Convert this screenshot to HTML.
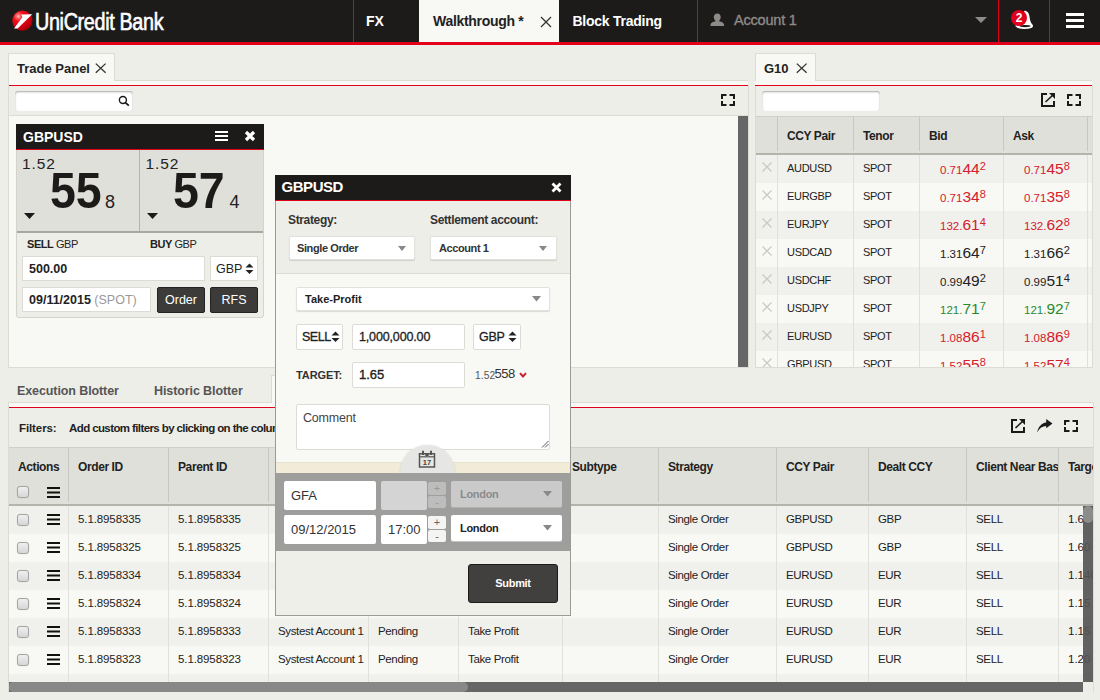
<!DOCTYPE html>
<html><head><meta charset="utf-8">
<style>
*{box-sizing:border-box;margin:0;padding:0}
html,body{width:1100px;height:700px;overflow:hidden;background:#eeeee8;font-family:"Liberation Sans",sans-serif;color:#222}
.a{position:absolute}
.hdr{left:0;top:0;width:1100px;height:42px;background:#1d1a1a}
.redbar{left:0;top:42px;width:1100px;height:3px;background:#e2001a}
.vr{top:0;width:1px;height:42px;background:#e2001a}
.ht{font-weight:bold;font-size:14px;color:#fff;white-space:nowrap;line-height:16px}
.t{white-space:nowrap}
.b{font-weight:bold}
.sel{background:#fff;border:1px solid #e2e2da;border-radius:2px;box-shadow:0 1px 1px rgba(0,0,0,0.12)}
.inp{background:#fff;border:1px solid #dcdcd4;border-radius:2px}
.inp2{background:#fff;border-radius:2px}
.pm{width:18px;font-size:11px;line-height:12px;text-align:center;border-radius:2px}
</style></head><body>
<!-- HEADER -->
<div class="a hdr"></div>
<div class="a redbar"></div>
<svg class="a" style="left:10px;top:8px" width="26" height="26" viewBox="10 8 26 26">
 <defs>
  <radialGradient id="ball" cx="0.3" cy="0.28" r="0.8">
   <stop offset="0" stop-color="#ffc8c8"/><stop offset="0.12" stop-color="#ff6a6a"/><stop offset="0.3" stop-color="#f0101c"/><stop offset="0.7" stop-color="#d00010"/><stop offset="1" stop-color="#a00008"/>
  </radialGradient>
 </defs>
 <circle cx="22.4" cy="20.7" r="10.1" fill="url(#ball)"/>
 <polygon points="14,28.6 22.3,17.3 21.4,14.6 32.3,14.2 17.6,28.6" fill="#fff"/>
</svg>
<div class="a t" style="left:35px;top:9px;font-size:23px;color:#fff;-webkit-text-stroke:0.6px #fff;letter-spacing:-0.4px;word-spacing:0px;transform:scaleX(0.86);transform-origin:0 0;line-height:26px">UniCredit Bank</div>
<div class="a vr" style="left:353px"></div>
<div class="a vr" style="left:697px"></div>
<div class="a vr" style="left:998px"></div>
<div class="a vr" style="left:1049px"></div>
<div class="a ht" style="left:366px;top:13px">FX</div>
<div class="a" style="left:419px;top:0;width:140px;height:42px;background:#f8f8f4"></div>
<div class="a ht" style="left:433px;top:13px;color:#222;letter-spacing:-0.3px">Walkthrough *</div>
<svg class="a" style="left:540px;top:16px" width="12" height="12"><path d="M1 1L11 11M11 1L1 11" stroke="#333" stroke-width="1.3"/></svg>
<div class="a ht" style="left:572.5px;top:13px;letter-spacing:-0.25px">Block Trading</div>
<svg class="a" style="left:710px;top:13px" width="15" height="14" viewBox="0 0 15 14"><path d="M7.5 0.5c2 0 3.2 1.6 3.2 3.6 0 1.6-0.8 3-1.6 3.6v0.6c2.6 0.8 5 1.6 5 3.6V13H0.5v-1.1c0-2 2.4-2.8 5-3.6v-0.6C4.6 7.1 3.8 5.7 3.8 4.1c0-2 1.2-3.6 3.7-3.6z" fill="#8d8b87"/></svg>
<div class="a t" style="left:734px;top:12px;font-size:14.5px;color:#8d8b87;-webkit-text-stroke:0.35px #8d8b87;letter-spacing:-0.2px;line-height:17px">Account 1</div>
<svg class="a" style="left:975px;top:17px" width="12" height="7"><polygon points="0,0 12,0 6,6" fill="#8d8b87"/></svg>
<svg class="a" style="left:1008px;top:8px" width="30" height="24" viewBox="1008 8 30 24">
 <path d="M1024.5 10.8c2.8 0 4.6 2.4 5 5.6 0.4 3.4 1.1 6.2 3.3 8.6 l0.2 1.6 h-17.5 l0.2-1.6" fill="#fff"/>
 <ellipse cx="1024.5" cy="26.6" rx="8.4" ry="2.3" fill="#fff"/>
 <ellipse cx="1025" cy="26.1" rx="5.5" ry="1.1" fill="#1d1a1a"/>
 <circle cx="1019" cy="18" r="8" fill="#e2001a"/>
 <text x="1019" y="22.3" font-size="12" font-weight="bold" font-family="Liberation Sans" fill="#fff" text-anchor="middle">2</text>
</svg>
<div class="a" style="left:1066px;top:13px;width:18px;height:3px;background:#fff"></div>
<div class="a" style="left:1066px;top:19px;width:18px;height:3px;background:#fff"></div>
<div class="a" style="left:1066px;top:25px;width:18px;height:3px;background:#fff"></div>


<!-- TRADE PANEL -->
<div class="a" style="left:8px;top:53px;width:107px;height:28px;background:#f8f8f4;border:1px solid #dcdcd4;border-bottom:none"></div>
<div class="a t b" style="left:17px;top:61px;font-size:13px;line-height:15px;color:#222">Trade Panel</div>
<svg class="a" style="left:95px;top:63px" width="12" height="11"><path d="M0.8 0.6L10.6 9.8M10.6 0.6L0.8 9.8" stroke="#333" stroke-width="1.3"/></svg>
<div class="a" style="left:115px;top:80px;width:633px;height:1px;background:#dcdcd4"></div>
<div class="a" style="left:9px;top:81px;width:739px;height:4px;background:#f8f8f4"></div>
<div class="a" style="left:9px;top:85px;width:739px;height:1px;background:#e2001a"></div>
<div class="a" style="left:8px;top:81px;width:1px;height:287px;background:#dcdcd4"></div>
<div class="a" style="left:748px;top:85px;width:1px;height:283px;background:#dcdcd4"></div>
<div class="a" style="left:9px;top:115px;width:739px;height:1px;background:#dcdcd4"></div>
<div class="a" style="left:9px;top:116px;width:729px;height:251px;background:#f8f8f4"></div>
<div class="a" style="left:738px;top:116px;width:10px;height:251px;background:#666"></div>
<div class="a" style="left:8px;top:367px;width:741px;height:1px;background:#dcdcd4"></div>
<div class="a" style="left:15px;top:91px;width:118px;height:20px;background:#fff;border-radius:3px;box-shadow:inset 0 1px 2px rgba(0,0,0,0.35)"></div>
<svg class="a" style="left:118px;top:95px" width="13" height="12"><circle cx="4.9" cy="5" r="3.5" fill="none" stroke="#1a1a1a" stroke-width="1.4"/><path d="M7.4 7.6L10.8 10.6" stroke="#1a1a1a" stroke-width="1.9"/></svg>
<svg class="a" style="left:721px;top:94px" width="15" height="13"><path d="M1 5V1H5.5M8.5 1H13V5M13 7V11H8.5M5.5 11H1V7" fill="none" stroke="#1a1a1a" stroke-width="2"/></svg>


<!-- TILE -->
<div class="a" style="left:16px;top:124px;width:248px;height:194px;background:#eeeee8;border:1px solid #d4d4cc;border-radius:0 0 3px 3px"></div>
<div class="a" style="left:16px;top:124px;width:248px;height:25px;background:#1d1a1a"></div>
<div class="a" style="left:16px;top:149px;width:248px;height:1px;background:#e2001a"></div>
<div class="a ht" style="left:23px;top:129px">GBPUSD</div>
<div class="a" style="left:215px;top:131px;width:13px;height:2px;background:#fff"></div>
<div class="a" style="left:215px;top:135px;width:13px;height:2px;background:#fff"></div>
<div class="a" style="left:215px;top:139px;width:13px;height:2px;background:#fff"></div>
<svg class="a" style="left:244px;top:130px" width="12" height="12"><path d="M2 2L10 10M10 2L2 10" stroke="#fff" stroke-width="3.2"/></svg>
<div class="a" style="left:17px;top:150px;width:246px;height:81px;background:#e0e0da"></div>
<div class="a" style="left:139px;top:150px;width:1px;height:81px;background:#b4b4ac"></div>
<div class="a" style="left:17px;top:231px;width:246px;height:2px;background:#a8a8a0"></div>
<div class="a t" style="left:22px;top:155px;font-size:15.5px;letter-spacing:0.9px;line-height:17px;color:#222">1.52</div>
<div class="a t b" style="left:50px;top:165.5px;font-size:50px;line-height:50px;transform:scaleX(0.93);transform-origin:0 0;color:#1d1a1a">55</div>
<div class="a t" style="left:105px;top:192.5px;font-size:18px;line-height:18px;color:#222">8</div>
<svg class="a" style="left:24px;top:213px" width="11" height="7"><polygon points="0,0 11,0 5.5,6" fill="#1d1a1a"/></svg>
<div class="a t" style="left:145.5px;top:155px;font-size:15.5px;letter-spacing:0.9px;line-height:17px;color:#222">1.52</div>
<div class="a t b" style="left:173px;top:165.5px;font-size:50px;line-height:50px;transform:scaleX(0.93);transform-origin:0 0;color:#1d1a1a">57</div>
<div class="a t" style="left:229.5px;top:192.5px;font-size:18px;line-height:18px;color:#222">4</div>
<svg class="a" style="left:147px;top:213px" width="11" height="7"><polygon points="0,0 11,0 5.5,6" fill="#1d1a1a"/></svg>
<div class="a t" style="left:27px;top:238px;font-size:11px;letter-spacing:-0.45px;line-height:12px;color:#222"><b>SELL</b> GBP</div>
<div class="a t" style="left:150px;top:238px;font-size:11px;letter-spacing:-0.45px;line-height:12px;color:#222"><b>BUY</b> GBP</div>
<div class="a" style="left:22px;top:256px;width:183px;height:25px;background:#fff;border:1px solid #dcdcd4"></div>
<div class="a t b" style="left:29px;top:262px;font-size:12.5px;line-height:14px;color:#222">500.00</div>
<div class="a" style="left:210px;top:256px;width:48px;height:25px;background:#fff;border:1px solid #dcdcd4"></div>
<div class="a t" style="left:216px;top:262px;font-size:12.5px;line-height:14px;color:#222">GBP</div>
<svg class="a" style="left:245px;top:263px" width="9" height="12"><polygon points="0.5,4.5 8.5,4.5 4.5,0.5" fill="#222"/><polygon points="0.5,7 8.5,7 4.5,11" fill="#222"/></svg>
<div class="a" style="left:22px;top:287px;width:129px;height:25px;background:#fff;border:1px solid #dcdcd4"></div>
<div class="a t" style="left:29px;top:293px;font-size:12.5px;line-height:14px;color:#222"><b>09/11/2015</b> <span style="color:#999">(SPOT)</span></div>
<div class="a" style="left:157px;top:287px;width:48px;height:26px;background:#3d3b39;border:1px solid #222;border-radius:2px"></div>
<div class="a t" style="left:157px;top:293px;width:48px;text-align:center;font-size:12.5px;line-height:14px;color:#fff">Order</div>
<div class="a" style="left:210px;top:287px;width:48px;height:26px;background:#3d3b39;border:1px solid #222;border-radius:2px"></div>
<div class="a t" style="left:210px;top:293px;width:48px;text-align:center;font-size:12.5px;line-height:14px;color:#fff">RFS</div>


<!-- G10 PANEL -->
<div class="a" style="left:755px;top:53px;width:61px;height:28px;background:#f8f8f4;border:1px solid #dcdcd4;border-bottom:none"></div>
<div class="a t b" style="left:764px;top:61px;font-size:13px;line-height:15px;color:#222">G10</div>
<svg class="a" style="left:796px;top:63px" width="12" height="11"><path d="M0.8 0.6L10.6 9.8M10.6 0.6L0.8 9.8" stroke="#333" stroke-width="1.3"/></svg>
<div class="a" style="left:816px;top:80px;width:276px;height:1px;background:#dcdcd4"></div>
<div class="a" style="left:755px;top:81px;width:337px;height:4px;background:#f8f8f4"></div>
<div class="a" style="left:755px;top:85px;width:337px;height:1px;background:#e2001a"></div>
<div class="a" style="left:755px;top:86px;width:1px;height:282px;background:#dcdcd4"></div>
<div class="a" style="left:1092px;top:86px;width:1px;height:282px;background:#dcdcd4"></div>
<div class="a" style="left:762px;top:91px;width:118px;height:20px;background:#fff;border-radius:3px;box-shadow:inset 0 1px 2px rgba(0,0,0,0.35)"></div>
<svg class="a" style="left:1040px;top:92px" width="16" height="16"><path d="M7 2H2V14H14V9" fill="none" stroke="#1a1a1a" stroke-width="2"/><path d="M9 1H15V7Z" fill="#1a1a1a"/><path d="M13.5 2.5L5.5 10" stroke="#1a1a1a" stroke-width="1.6"/></svg>
<svg class="a" style="left:1067px;top:94px" width="15" height="13"><path d="M1 5V1H5.5M8.5 1H13V5M13 7V11H8.5M5.5 11H1V7" fill="none" stroke="#1a1a1a" stroke-width="2"/></svg>
<div class="a" style="left:756px;top:116px;width:336px;height:37px;background:#e0e0da;border-top:1px solid #d0d0c8"></div>
<div class="a" style="left:756px;top:153px;width:336px;height:2px;background:#b4b4ac"></div>
<div class="a" style="left:777px;top:117px;width:1px;height:34px;background:#c8c8c0"></div>
<div class="a" style="left:853px;top:117px;width:1px;height:34px;background:#c8c8c0"></div>
<div class="a" style="left:919px;top:117px;width:1px;height:34px;background:#c8c8c0"></div>
<div class="a" style="left:1003px;top:117px;width:1px;height:34px;background:#c8c8c0"></div>
<div class="a" style="left:1087px;top:117px;width:1px;height:34px;background:#c8c8c0"></div>
<div class="a t b" style="left:787px;top:129px;font-size:12px;letter-spacing:-0.4px;line-height:14px">CCY Pair</div>
<div class="a t b" style="left:863px;top:129px;font-size:12px;letter-spacing:-0.4px;line-height:14px">Tenor</div>
<div class="a t b" style="left:929px;top:129px;font-size:12px;letter-spacing:-0.4px;line-height:14px">Bid</div>
<div class="a t b" style="left:1013px;top:129px;font-size:12px;letter-spacing:-0.4px;line-height:14px">Ask</div>
<div class="a" style="left:756px;top:155px;width:336px;height:212px;overflow:hidden">
<div class="a" style="left:0;top:0px;width:336px;height:28px;background:#f0f0ec"></div>
<svg class="a" style="left:6px;top:7px" width="10" height="10"><path d="M0.5 0.5L9.5 9.5M9.5 0.5L0.5 9.5" stroke="#c8c8c4" stroke-width="1.2"/></svg>
<div class="a t" style="left:31px;top:7px;font-size:11px;letter-spacing:-0.3px;line-height:13px">AUDUSD</div>
<div class="a t" style="left:107px;top:7px;font-size:11px;letter-spacing:-0.3px;line-height:13px">SPOT</div>
<div class="a t" style="left:184px;top:6px;line-height:16px;color:#d4202c"><span style="font-size:11.5px">0.71</span><span style="font-size:15.5px">44</span><span style="font-size:11px;position:relative;top:-4px">2</span></div>
<div class="a t" style="left:268px;top:6px;line-height:16px;color:#d4202c"><span style="font-size:11.5px">0.71</span><span style="font-size:15.5px">45</span><span style="font-size:11px;position:relative;top:-4px">8</span></div>
<div class="a" style="left:0;top:28px;width:336px;height:28px;background:#f8f8f4"></div>
<svg class="a" style="left:6px;top:35px" width="10" height="10"><path d="M0.5 0.5L9.5 9.5M9.5 0.5L0.5 9.5" stroke="#c8c8c4" stroke-width="1.2"/></svg>
<div class="a t" style="left:31px;top:35px;font-size:11px;letter-spacing:-0.3px;line-height:13px">EURGBP</div>
<div class="a t" style="left:107px;top:35px;font-size:11px;letter-spacing:-0.3px;line-height:13px">SPOT</div>
<div class="a t" style="left:184px;top:34px;line-height:16px;color:#d4202c"><span style="font-size:11.5px">0.71</span><span style="font-size:15.5px">34</span><span style="font-size:11px;position:relative;top:-4px">8</span></div>
<div class="a t" style="left:268px;top:34px;line-height:16px;color:#d4202c"><span style="font-size:11.5px">0.71</span><span style="font-size:15.5px">35</span><span style="font-size:11px;position:relative;top:-4px">8</span></div>
<div class="a" style="left:0;top:56px;width:336px;height:28px;background:#f0f0ec"></div>
<svg class="a" style="left:6px;top:63px" width="10" height="10"><path d="M0.5 0.5L9.5 9.5M9.5 0.5L0.5 9.5" stroke="#c8c8c4" stroke-width="1.2"/></svg>
<div class="a t" style="left:31px;top:63px;font-size:11px;letter-spacing:-0.3px;line-height:13px">EURJPY</div>
<div class="a t" style="left:107px;top:63px;font-size:11px;letter-spacing:-0.3px;line-height:13px">SPOT</div>
<div class="a t" style="left:184px;top:62px;line-height:16px;color:#d4202c"><span style="font-size:11.5px">132.</span><span style="font-size:15.5px">61</span><span style="font-size:11px;position:relative;top:-4px">4</span></div>
<div class="a t" style="left:268px;top:62px;line-height:16px;color:#d4202c"><span style="font-size:11.5px">132.</span><span style="font-size:15.5px">62</span><span style="font-size:11px;position:relative;top:-4px">8</span></div>
<div class="a" style="left:0;top:84px;width:336px;height:28px;background:#f8f8f4"></div>
<svg class="a" style="left:6px;top:91px" width="10" height="10"><path d="M0.5 0.5L9.5 9.5M9.5 0.5L0.5 9.5" stroke="#c8c8c4" stroke-width="1.2"/></svg>
<div class="a t" style="left:31px;top:91px;font-size:11px;letter-spacing:-0.3px;line-height:13px">USDCAD</div>
<div class="a t" style="left:107px;top:91px;font-size:11px;letter-spacing:-0.3px;line-height:13px">SPOT</div>
<div class="a t" style="left:184px;top:90px;line-height:16px;color:#222"><span style="font-size:11.5px">1.31</span><span style="font-size:15.5px">64</span><span style="font-size:11px;position:relative;top:-4px">7</span></div>
<div class="a t" style="left:268px;top:90px;line-height:16px;color:#222"><span style="font-size:11.5px">1.31</span><span style="font-size:15.5px">66</span><span style="font-size:11px;position:relative;top:-4px">2</span></div>
<div class="a" style="left:0;top:112px;width:336px;height:28px;background:#f0f0ec"></div>
<svg class="a" style="left:6px;top:119px" width="10" height="10"><path d="M0.5 0.5L9.5 9.5M9.5 0.5L0.5 9.5" stroke="#c8c8c4" stroke-width="1.2"/></svg>
<div class="a t" style="left:31px;top:119px;font-size:11px;letter-spacing:-0.3px;line-height:13px">USDCHF</div>
<div class="a t" style="left:107px;top:119px;font-size:11px;letter-spacing:-0.3px;line-height:13px">SPOT</div>
<div class="a t" style="left:184px;top:118px;line-height:16px;color:#222"><span style="font-size:11.5px">0.99</span><span style="font-size:15.5px">49</span><span style="font-size:11px;position:relative;top:-4px">2</span></div>
<div class="a t" style="left:268px;top:118px;line-height:16px;color:#222"><span style="font-size:11.5px">0.99</span><span style="font-size:15.5px">51</span><span style="font-size:11px;position:relative;top:-4px">4</span></div>
<div class="a" style="left:0;top:140px;width:336px;height:28px;background:#f8f8f4"></div>
<svg class="a" style="left:6px;top:147px" width="10" height="10"><path d="M0.5 0.5L9.5 9.5M9.5 0.5L0.5 9.5" stroke="#c8c8c4" stroke-width="1.2"/></svg>
<div class="a t" style="left:31px;top:147px;font-size:11px;letter-spacing:-0.3px;line-height:13px">USDJPY</div>
<div class="a t" style="left:107px;top:147px;font-size:11px;letter-spacing:-0.3px;line-height:13px">SPOT</div>
<div class="a t" style="left:184px;top:146px;line-height:16px;color:#2b8a2b"><span style="font-size:11.5px">121.</span><span style="font-size:15.5px">71</span><span style="font-size:11px;position:relative;top:-4px">7</span></div>
<div class="a t" style="left:268px;top:146px;line-height:16px;color:#2b8a2b"><span style="font-size:11.5px">121.</span><span style="font-size:15.5px">92</span><span style="font-size:11px;position:relative;top:-4px">7</span></div>
<div class="a" style="left:0;top:168px;width:336px;height:28px;background:#f0f0ec"></div>
<svg class="a" style="left:6px;top:175px" width="10" height="10"><path d="M0.5 0.5L9.5 9.5M9.5 0.5L0.5 9.5" stroke="#c8c8c4" stroke-width="1.2"/></svg>
<div class="a t" style="left:31px;top:175px;font-size:11px;letter-spacing:-0.3px;line-height:13px">EURUSD</div>
<div class="a t" style="left:107px;top:175px;font-size:11px;letter-spacing:-0.3px;line-height:13px">SPOT</div>
<div class="a t" style="left:184px;top:174px;line-height:16px;color:#d4202c"><span style="font-size:11.5px">1.08</span><span style="font-size:15.5px">86</span><span style="font-size:11px;position:relative;top:-4px">1</span></div>
<div class="a t" style="left:268px;top:174px;line-height:16px;color:#d4202c"><span style="font-size:11.5px">1.08</span><span style="font-size:15.5px">86</span><span style="font-size:11px;position:relative;top:-4px">9</span></div>
<div class="a" style="left:0;top:196px;width:336px;height:28px;background:#f8f8f4"></div>
<svg class="a" style="left:6px;top:203px" width="10" height="10"><path d="M0.5 0.5L9.5 9.5M9.5 0.5L0.5 9.5" stroke="#c8c8c4" stroke-width="1.2"/></svg>
<div class="a t" style="left:31px;top:203px;font-size:11px;letter-spacing:-0.3px;line-height:13px">GBPUSD</div>
<div class="a t" style="left:107px;top:203px;font-size:11px;letter-spacing:-0.3px;line-height:13px">SPOT</div>
<div class="a t" style="left:184px;top:202px;line-height:16px;color:#d4202c"><span style="font-size:11.5px">1.52</span><span style="font-size:15.5px">55</span><span style="font-size:11px;position:relative;top:-4px">8</span></div>
<div class="a t" style="left:268px;top:202px;line-height:16px;color:#d4202c"><span style="font-size:11.5px">1.52</span><span style="font-size:15.5px">57</span><span style="font-size:11px;position:relative;top:-4px">4</span></div>
</div>
<div class="a" style="left:777px;top:155px;width:1px;height:212px;background:#e0e0da"></div>
<div class="a" style="left:853px;top:155px;width:1px;height:212px;background:#e0e0da"></div>
<div class="a" style="left:919px;top:155px;width:1px;height:212px;background:#e0e0da"></div>
<div class="a" style="left:1003px;top:155px;width:1px;height:212px;background:#e0e0da"></div>
<div class="a" style="left:1087px;top:155px;width:1px;height:212px;background:#e0e0da"></div>
<div class="a" style="left:755px;top:367px;width:338px;height:1px;background:#dcdcd4"></div>


<!-- BLOTTER -->
<div class="a" style="left:8px;top:402px;width:1px;height:290px;background:#dcdcd4"></div>
<div class="a" style="left:1093px;top:402px;width:1px;height:290px;background:#dcdcd4"></div>
<div class="a t b" style="left:17px;top:384px;font-size:12.5px;letter-spacing:-0.1px;line-height:14px;color:#555">Execution Blotter</div>
<div class="a t b" style="left:154px;top:384px;font-size:12.5px;letter-spacing:-0.1px;line-height:14px;color:#555">Historic Blotter</div>
<div class="a" style="left:271px;top:375px;width:120px;height:28px;background:#f8f8f4;border:1px solid #dcdcd4;border-bottom:none"></div>
<div class="a" style="left:8px;top:402px;width:263px;height:1px;background:#dcdcd4"></div>
<div class="a" style="left:391px;top:402px;width:702px;height:1px;background:#dcdcd4"></div>
<div class="a" style="left:9px;top:403px;width:1084px;height:4px;background:#f8f8f4"></div>
<div class="a" style="left:9px;top:407px;width:1084px;height:1px;background:#e2001a"></div>
<div class="a t b" style="left:19px;top:422px;font-size:11.5px;letter-spacing:-0.1px;line-height:13px;color:#222">Filters:</div>
<div class="a t b" style="left:69px;top:422px;font-size:11.5px;letter-spacing:-0.6px;line-height:13px;color:#222">Add custom filters by clicking on the column headers</div>
<svg class="a" style="left:1010px;top:418px" width="16" height="16"><path d="M7 2H2V14H14V9" fill="none" stroke="#1a1a1a" stroke-width="2"/><path d="M9 1H15V7Z" fill="#1a1a1a"/><path d="M13.5 2.5L5.5 10" stroke="#1a1a1a" stroke-width="1.6"/></svg>
<svg class="a" style="left:1036px;top:418px" width="18" height="16"><path d="M1.2 14.5C2 8.8 5.5 5 10.2 4.4V1L16.5 5.5L10.2 10.2V8C6.5 8 3.5 10 1.2 14.5Z" fill="#1a1a1a"/></svg>
<svg class="a" style="left:1064px;top:420px" width="15" height="13"><path d="M1 5V1H5.5M8.5 1H13V5M13 7V11H8.5M5.5 11H1V7" fill="none" stroke="#1a1a1a" stroke-width="2"/></svg>
<div class="a" style="left:9px;top:447px;width:1084px;height:57px;background:#e0e0da;border-top:1px solid #d0d0c8"></div>
<div class="a" style="left:9px;top:504px;width:1084px;height:2px;background:#b4b4ac"></div>
<div class="a" style="left:9px;top:506px;width:1084px;height:176px;overflow:hidden">
<div class="a" style="left:0;top:0px;width:1084px;height:28px;background:#f0f0ec"></div>
<div class="a" style="left:8px;top:8px;width:12px;height:12px;background:linear-gradient(#efefef,#d6d6d6);border:1px solid #a4a4a0;border-radius:3px;box-shadow:0 0 1px rgba(0,0,0,0.2)"></div>
<svg class="a" style="left:38px;top:8px" width="13" height="12"><path d="M0 1H13M0 5.5H13M0 10H13" stroke="#111" stroke-width="2"/></svg>
<div class="a t" style="left:69px;top:7px;font-size:11.5px;letter-spacing:-0.1px;line-height:13px;color:#222">5.1.8958335</div>
<div class="a t" style="left:169px;top:7px;font-size:11.5px;letter-spacing:-0.1px;line-height:13px;color:#222">5.1.8958335</div>
<div class="a t" style="left:659px;top:7px;font-size:11.5px;letter-spacing:-0.35px;line-height:13px;color:#222">Single Order</div>
<div class="a t" style="left:777px;top:7px;font-size:11.5px;letter-spacing:-0.35px;line-height:13px;color:#222">GBPUSD</div>
<div class="a t" style="left:869px;top:7px;font-size:11.5px;letter-spacing:-0.35px;line-height:13px;color:#222">GBP</div>
<div class="a t" style="left:967px;top:7px;font-size:11.5px;letter-spacing:-0.35px;line-height:13px;color:#222">SELL</div>
<div class="a t" style="left:1059px;top:7px;font-size:11.5px;letter-spacing:0;line-height:13px;color:#222">1.65</div>
<div class="a" style="left:0;top:28px;width:1084px;height:28px;background:#f8f8f4"></div>
<div class="a" style="left:8px;top:36px;width:12px;height:12px;background:linear-gradient(#efefef,#d6d6d6);border:1px solid #a4a4a0;border-radius:3px;box-shadow:0 0 1px rgba(0,0,0,0.2)"></div>
<svg class="a" style="left:38px;top:36px" width="13" height="12"><path d="M0 1H13M0 5.5H13M0 10H13" stroke="#111" stroke-width="2"/></svg>
<div class="a t" style="left:69px;top:35px;font-size:11.5px;letter-spacing:-0.1px;line-height:13px;color:#222">5.1.8958325</div>
<div class="a t" style="left:169px;top:35px;font-size:11.5px;letter-spacing:-0.1px;line-height:13px;color:#222">5.1.8958325</div>
<div class="a t" style="left:659px;top:35px;font-size:11.5px;letter-spacing:-0.35px;line-height:13px;color:#222">Single Order</div>
<div class="a t" style="left:777px;top:35px;font-size:11.5px;letter-spacing:-0.35px;line-height:13px;color:#222">GBPUSD</div>
<div class="a t" style="left:869px;top:35px;font-size:11.5px;letter-spacing:-0.35px;line-height:13px;color:#222">GBP</div>
<div class="a t" style="left:967px;top:35px;font-size:11.5px;letter-spacing:-0.35px;line-height:13px;color:#222">SELL</div>
<div class="a t" style="left:1059px;top:35px;font-size:11.5px;letter-spacing:0;line-height:13px;color:#222">1.60</div>
<div class="a" style="left:0;top:56px;width:1084px;height:28px;background:#f0f0ec"></div>
<div class="a" style="left:8px;top:64px;width:12px;height:12px;background:linear-gradient(#efefef,#d6d6d6);border:1px solid #a4a4a0;border-radius:3px;box-shadow:0 0 1px rgba(0,0,0,0.2)"></div>
<svg class="a" style="left:38px;top:64px" width="13" height="12"><path d="M0 1H13M0 5.5H13M0 10H13" stroke="#111" stroke-width="2"/></svg>
<div class="a t" style="left:69px;top:63px;font-size:11.5px;letter-spacing:-0.1px;line-height:13px;color:#222">5.1.8958334</div>
<div class="a t" style="left:169px;top:63px;font-size:11.5px;letter-spacing:-0.1px;line-height:13px;color:#222">5.1.8958334</div>
<div class="a t" style="left:659px;top:63px;font-size:11.5px;letter-spacing:-0.35px;line-height:13px;color:#222">Single Order</div>
<div class="a t" style="left:777px;top:63px;font-size:11.5px;letter-spacing:-0.35px;line-height:13px;color:#222">EURUSD</div>
<div class="a t" style="left:869px;top:63px;font-size:11.5px;letter-spacing:-0.35px;line-height:13px;color:#222">EUR</div>
<div class="a t" style="left:967px;top:63px;font-size:11.5px;letter-spacing:-0.35px;line-height:13px;color:#222">SELL</div>
<div class="a t" style="left:1059px;top:63px;font-size:11.5px;letter-spacing:0;line-height:13px;color:#222">1.140</div>
<div class="a" style="left:0;top:84px;width:1084px;height:28px;background:#f8f8f4"></div>
<div class="a" style="left:8px;top:92px;width:12px;height:12px;background:linear-gradient(#efefef,#d6d6d6);border:1px solid #a4a4a0;border-radius:3px;box-shadow:0 0 1px rgba(0,0,0,0.2)"></div>
<svg class="a" style="left:38px;top:92px" width="13" height="12"><path d="M0 1H13M0 5.5H13M0 10H13" stroke="#111" stroke-width="2"/></svg>
<div class="a t" style="left:69px;top:91px;font-size:11.5px;letter-spacing:-0.1px;line-height:13px;color:#222">5.1.8958324</div>
<div class="a t" style="left:169px;top:91px;font-size:11.5px;letter-spacing:-0.1px;line-height:13px;color:#222">5.1.8958324</div>
<div class="a t" style="left:659px;top:91px;font-size:11.5px;letter-spacing:-0.35px;line-height:13px;color:#222">Single Order</div>
<div class="a t" style="left:777px;top:91px;font-size:11.5px;letter-spacing:-0.35px;line-height:13px;color:#222">EURUSD</div>
<div class="a t" style="left:869px;top:91px;font-size:11.5px;letter-spacing:-0.35px;line-height:13px;color:#222">EUR</div>
<div class="a t" style="left:967px;top:91px;font-size:11.5px;letter-spacing:-0.35px;line-height:13px;color:#222">SELL</div>
<div class="a t" style="left:1059px;top:91px;font-size:11.5px;letter-spacing:0;line-height:13px;color:#222">1.15</div>
<div class="a" style="left:0;top:112px;width:1084px;height:28px;background:#f0f0ec"></div>
<div class="a" style="left:8px;top:120px;width:12px;height:12px;background:linear-gradient(#efefef,#d6d6d6);border:1px solid #a4a4a0;border-radius:3px;box-shadow:0 0 1px rgba(0,0,0,0.2)"></div>
<svg class="a" style="left:38px;top:120px" width="13" height="12"><path d="M0 1H13M0 5.5H13M0 10H13" stroke="#111" stroke-width="2"/></svg>
<div class="a t" style="left:69px;top:119px;font-size:11.5px;letter-spacing:-0.1px;line-height:13px;color:#222">5.1.8958333</div>
<div class="a t" style="left:169px;top:119px;font-size:11.5px;letter-spacing:-0.1px;line-height:13px;color:#222">5.1.8958333</div>
<div class="a t" style="left:269px;top:119px;font-size:11.5px;letter-spacing:-0.35px;line-height:13px;color:#222">Systest Account 1</div>
<div class="a t" style="left:369px;top:119px;font-size:11.5px;letter-spacing:-0.35px;line-height:13px;color:#222">Pending</div>
<div class="a t" style="left:459px;top:119px;font-size:11.5px;letter-spacing:-0.35px;line-height:13px;color:#222">Take Profit</div>
<div class="a t" style="left:659px;top:119px;font-size:11.5px;letter-spacing:-0.35px;line-height:13px;color:#222">Single Order</div>
<div class="a t" style="left:777px;top:119px;font-size:11.5px;letter-spacing:-0.35px;line-height:13px;color:#222">EURUSD</div>
<div class="a t" style="left:869px;top:119px;font-size:11.5px;letter-spacing:-0.35px;line-height:13px;color:#222">EUR</div>
<div class="a t" style="left:967px;top:119px;font-size:11.5px;letter-spacing:-0.35px;line-height:13px;color:#222">SELL</div>
<div class="a t" style="left:1059px;top:119px;font-size:11.5px;letter-spacing:0;line-height:13px;color:#222">1.15</div>
<div class="a" style="left:0;top:140px;width:1084px;height:28px;background:#f8f8f4"></div>
<div class="a" style="left:8px;top:148px;width:12px;height:12px;background:linear-gradient(#efefef,#d6d6d6);border:1px solid #a4a4a0;border-radius:3px;box-shadow:0 0 1px rgba(0,0,0,0.2)"></div>
<svg class="a" style="left:38px;top:148px" width="13" height="12"><path d="M0 1H13M0 5.5H13M0 10H13" stroke="#111" stroke-width="2"/></svg>
<div class="a t" style="left:69px;top:147px;font-size:11.5px;letter-spacing:-0.1px;line-height:13px;color:#222">5.1.8958323</div>
<div class="a t" style="left:169px;top:147px;font-size:11.5px;letter-spacing:-0.1px;line-height:13px;color:#222">5.1.8958323</div>
<div class="a t" style="left:269px;top:147px;font-size:11.5px;letter-spacing:-0.35px;line-height:13px;color:#222">Systest Account 1</div>
<div class="a t" style="left:369px;top:147px;font-size:11.5px;letter-spacing:-0.35px;line-height:13px;color:#222">Pending</div>
<div class="a t" style="left:459px;top:147px;font-size:11.5px;letter-spacing:-0.35px;line-height:13px;color:#222">Take Profit</div>
<div class="a t" style="left:659px;top:147px;font-size:11.5px;letter-spacing:-0.35px;line-height:13px;color:#222">Single Order</div>
<div class="a t" style="left:777px;top:147px;font-size:11.5px;letter-spacing:-0.35px;line-height:13px;color:#222">EURUSD</div>
<div class="a t" style="left:869px;top:147px;font-size:11.5px;letter-spacing:-0.35px;line-height:13px;color:#222">EUR</div>
<div class="a t" style="left:967px;top:147px;font-size:11.5px;letter-spacing:-0.35px;line-height:13px;color:#222">SELL</div>
<div class="a t" style="left:1059px;top:147px;font-size:11.5px;letter-spacing:0;line-height:13px;color:#222">1.20</div>
<div class="a" style="left:0;top:168px;width:1084px;height:28px;background:#f0f0ec"></div>
</div>
<div class="a" style="left:68px;top:448px;width:1px;height:54px;background:#c8c8c0"></div>
<div class="a" style="left:68px;top:506px;width:1px;height:176px;background:#e0e0da"></div>
<div class="a" style="left:168px;top:448px;width:1px;height:54px;background:#c8c8c0"></div>
<div class="a" style="left:168px;top:506px;width:1px;height:176px;background:#e0e0da"></div>
<div class="a" style="left:268px;top:448px;width:1px;height:54px;background:#c8c8c0"></div>
<div class="a" style="left:268px;top:506px;width:1px;height:176px;background:#e0e0da"></div>
<div class="a" style="left:368px;top:448px;width:1px;height:54px;background:#c8c8c0"></div>
<div class="a" style="left:368px;top:506px;width:1px;height:176px;background:#e0e0da"></div>
<div class="a" style="left:458px;top:448px;width:1px;height:54px;background:#c8c8c0"></div>
<div class="a" style="left:458px;top:506px;width:1px;height:176px;background:#e0e0da"></div>
<div class="a" style="left:562px;top:448px;width:1px;height:54px;background:#c8c8c0"></div>
<div class="a" style="left:562px;top:506px;width:1px;height:176px;background:#e0e0da"></div>
<div class="a" style="left:658px;top:448px;width:1px;height:54px;background:#c8c8c0"></div>
<div class="a" style="left:658px;top:506px;width:1px;height:176px;background:#e0e0da"></div>
<div class="a" style="left:776px;top:448px;width:1px;height:54px;background:#c8c8c0"></div>
<div class="a" style="left:776px;top:506px;width:1px;height:176px;background:#e0e0da"></div>
<div class="a" style="left:868px;top:448px;width:1px;height:54px;background:#c8c8c0"></div>
<div class="a" style="left:868px;top:506px;width:1px;height:176px;background:#e0e0da"></div>
<div class="a" style="left:966px;top:448px;width:1px;height:54px;background:#c8c8c0"></div>
<div class="a" style="left:966px;top:506px;width:1px;height:176px;background:#e0e0da"></div>
<div class="a" style="left:1058px;top:448px;width:1px;height:54px;background:#c8c8c0"></div>
<div class="a" style="left:1058px;top:506px;width:1px;height:176px;background:#e0e0da"></div>
<div class="a" style="left:9px;top:448px;width:1084px;height:56px;overflow:hidden">
<div class="a t b" style="left:9px;top:12px;width:200px;overflow:hidden;font-size:12px;letter-spacing:-0.4px;line-height:14px;color:#222">Actions</div>
<div class="a t b" style="left:69px;top:12px;width:200px;overflow:hidden;font-size:12px;letter-spacing:-0.4px;line-height:14px;color:#222">Order ID</div>
<div class="a t b" style="left:169px;top:12px;width:200px;overflow:hidden;font-size:12px;letter-spacing:-0.4px;line-height:14px;color:#222">Parent ID</div>
<div class="a t b" style="left:563px;top:12px;width:200px;overflow:hidden;font-size:12px;letter-spacing:-0.4px;line-height:14px;color:#222">Subtype</div>
<div class="a t b" style="left:659px;top:12px;width:200px;overflow:hidden;font-size:12px;letter-spacing:-0.4px;line-height:14px;color:#222">Strategy</div>
<div class="a t b" style="left:777px;top:12px;width:200px;overflow:hidden;font-size:12px;letter-spacing:-0.4px;line-height:14px;color:#222">CCY Pair</div>
<div class="a t b" style="left:869px;top:12px;width:200px;overflow:hidden;font-size:12px;letter-spacing:-0.4px;line-height:14px;color:#222">Dealt CCY</div>
<div class="a t b" style="left:967px;top:12px;width:82px;overflow:hidden;font-size:12px;letter-spacing:-0.4px;line-height:14px;color:#222">Client Near Base</div>
<div class="a t b" style="left:1059px;top:12px;width:25px;overflow:hidden;font-size:12px;letter-spacing:-0.4px;line-height:14px;color:#222">Target</div>
<div class="a" style="left:8px;top:38px;width:12px;height:12px;background:linear-gradient(#efefef,#d6d6d6);border:1px solid #a4a4a0;border-radius:3px;box-shadow:0 0 1px rgba(0,0,0,0.2)"></div>
<svg class="a" style="left:38px;top:39px" width="13" height="12"><path d="M0 1H13M0 5.5H13M0 10H13" stroke="#111" stroke-width="2"/></svg>
</div>

<div class="a" style="left:1083px;top:506px;width:10px;height:176px;background:rgba(85,85,85,0.92)"></div>
<div class="a" style="left:1083px;top:506px;width:10px;height:17px;background:#8c8c8a;border-radius:5px"></div>
<div class="a" style="left:9px;top:682px;width:1074px;height:10px;background:#666"></div>
<div class="a" style="left:9px;top:682px;width:459px;height:10px;background:#888;border-radius:4px 5px 5px 4px"></div>
<div class="a" style="left:1083px;top:682px;width:10px;height:10px;background:#eeeee8"></div>


<!-- MODAL -->
<div class="a" style="left:275px;top:175px;width:296px;height:441px;background:#f8f8f4;border:1px solid #9a9a96;border-top:none"></div>
<div class="a" style="left:275px;top:175px;width:296px;height:25px;background:#1d1a1a"></div>
<div class="a" style="left:275px;top:200px;width:296px;height:1px;background:#e2001a"></div>
<div class="a ht" style="left:281.5px;top:178.5px;font-size:15px;letter-spacing:-0.45px">GBPUSD</div>
<svg class="a" style="left:551px;top:182px" width="11" height="11"><path d="M1.5 1.5L9.5 9.5M9.5 1.5L1.5 9.5" stroke="#fff" stroke-width="2.8"/></svg>
<div class="a" style="left:276px;top:201px;width:294px;height:72px;background:#eeeee8"></div>
<div class="a" style="left:276px;top:273px;width:294px;height:1px;background:#dcdcd4"></div>
<div class="a t b" style="left:288px;top:213px;font-size:12px;letter-spacing:-0.35px;line-height:14px;color:#333">Strategy:</div>
<div class="a t b" style="left:430px;top:213px;font-size:12px;letter-spacing:-0.35px;line-height:14px;color:#333">Settlement account:</div>
<div class="a sel" style="left:289px;top:236px;width:126px;height:24px"></div>
<div class="a t b" style="left:297px;top:242px;font-size:11px;letter-spacing:-0.4px;line-height:13px;color:#333">Single Order</div>
<svg class="a" style="left:398px;top:246px" width="8" height="6"><polygon points="0,0 8,0 4,5" fill="#888"/></svg>
<div class="a sel" style="left:430px;top:236px;width:127px;height:24px"></div>
<div class="a t b" style="left:439px;top:242px;font-size:11px;letter-spacing:-0.4px;line-height:13px;color:#333">Account 1</div>
<svg class="a" style="left:539px;top:246px" width="8" height="6"><polygon points="0,0 8,0 4,5" fill="#888"/></svg>

<div class="a sel" style="left:296px;top:287px;width:254px;height:24px"></div>
<div class="a t b" style="left:305px;top:293px;font-size:11px;letter-spacing:0px;line-height:13px;color:#222">Take-Profit</div>
<svg class="a" style="left:532px;top:296px" width="9" height="6"><polygon points="0,0 9,0 4.5,5.5" fill="#888"/></svg>

<div class="a inp" style="left:296px;top:324px;width:47px;height:26px"></div>
<div class="a t" style="left:302px;top:330px;font-size:12.5px;letter-spacing:-0.5px;line-height:14px;color:#222;-webkit-text-stroke:0.3px #222">SELL</div>
<svg class="a" style="left:331px;top:331px" width="9" height="12"><polygon points="0.5,4.5 8.5,4.5 4.5,0.5" fill="#222"/><polygon points="0.5,7 8.5,7 4.5,11" fill="#222"/></svg>
<div class="a inp" style="left:352px;top:324px;width:113px;height:26px"></div>
<div class="a t" style="left:359px;top:330px;font-size:12.5px;letter-spacing:-0.15px;line-height:14px;color:#222;-webkit-text-stroke:0.3px #222">1,000,000.00</div>
<div class="a inp" style="left:473px;top:324px;width:48px;height:26px"></div>
<div class="a t" style="left:479px;top:330px;font-size:12.5px;letter-spacing:-0.3px;line-height:14px;color:#222;-webkit-text-stroke:0.3px #222">GBP</div>
<svg class="a" style="left:508px;top:331px" width="9" height="12"><polygon points="0.5,4.5 8.5,4.5 4.5,0.5" fill="#222"/><polygon points="0.5,7 8.5,7 4.5,11" fill="#222"/></svg>

<div class="a t b" style="left:296px;top:369px;font-size:11px;letter-spacing:-0.1px;line-height:13px;color:#333">TARGET:</div>
<div class="a inp" style="left:352px;top:362px;width:113px;height:26px"></div>
<div class="a t" style="left:359px;top:368px;font-size:13px;letter-spacing:0px;line-height:14px;color:#222;-webkit-text-stroke:0.35px #222">1.65</div>
<div class="a t" style="left:475px;top:369.5px;font-size:10.2px;line-height:12px;letter-spacing:0.1px;color:#555">1.52</div><div class="a t" style="left:494.5px;top:366px;font-size:13px;line-height:15px;letter-spacing:-0.45px;color:#333">558</div>
<svg class="a" style="left:518.5px;top:371.5px" width="9" height="7"><path d="M1 1.2L4 4.5L7 1.2" fill="none" stroke="#c8202a" stroke-width="2"/></svg>

<div class="a inp" style="left:296px;top:404px;width:254px;height:46px"></div>
<div class="a t" style="left:303px;top:411px;font-size:12.5px;letter-spacing:-0.2px;line-height:14px;color:#444">Comment</div>
<svg class="a" style="left:541px;top:440px" width="8" height="8"><path d="M1 7.5L7.5 1M4 7.5L7.5 4" stroke="#555" stroke-width="1"/></svg>

<div class="a" style="left:276px;top:462px;width:294px;height:11px;background:#f1ebd8;border-top:1px solid #e6e2d0"></div>
<div class="a" style="left:399.5px;top:444.5px;width:55px;height:55px;border-radius:50%;background:#e6e6e4;box-shadow:0 0 2px rgba(0,0,0,0.12);clip-path:inset(-3px -3px 26.5px -3px)"></div>
<svg class="a" style="left:418px;top:450px" width="18" height="18" viewBox="0 0 18 18"><path d="M1.5 3.8H16.5V17H1.5Z" fill="none" stroke="#555" stroke-width="1.5"/><path d="M1.5 6.8H16.5" stroke="#555" stroke-width="1.2"/><path d="M4 0.8H6V5H4ZM12 0.8H14V5H12ZM7.3 3H10.7V6H7.3Z" fill="#555"/><text x="9" y="15.3" font-size="7.5" font-family="Liberation Sans" font-weight="bold" fill="#444" text-anchor="middle">17</text></svg>

<div class="a" style="left:276px;top:473px;width:294px;height:78px;background:#9e9e9c"></div>
<div class="a inp2" style="left:284px;top:481px;width:92px;height:29px"></div>
<div class="a t" style="left:291px;top:488px;font-size:13px;line-height:15px;color:#333">GFA</div>
<div class="a" style="left:381px;top:481px;width:46px;height:29px;background:#d4d4d4;border-radius:2px"></div>
<div class="a pm" style="left:428px;top:482px;height:12.5px;background:#bdbdbd;color:#999">+</div>
<div class="a pm" style="left:428px;top:496px;height:12px;background:#bdbdbd;color:#999">-</div>
<div class="a" style="left:451px;top:481px;width:111px;height:26px;background:#cacaca;border-radius:2px;box-shadow:0 1px 0 #b4b4b4"></div>
<div class="a t b" style="left:460px;top:488px;font-size:11px;letter-spacing:-0.3px;line-height:13px;color:#8a8a8a">London</div>
<svg class="a" style="left:543px;top:491px" width="9" height="6"><polygon points="0,0 9,0 4.5,5.5" fill="#8a8a8a"/></svg>

<div class="a inp2" style="left:284px;top:515px;width:92px;height:29px"></div>
<div class="a t" style="left:291px;top:522px;font-size:13px;line-height:15px;color:#333">09/12/2015</div>
<div class="a inp2" style="left:381px;top:515px;width:46px;height:29px"></div>
<div class="a t" style="left:388px;top:522px;font-size:13px;line-height:15px;color:#333">17:00</div>
<div class="a pm" style="left:428px;top:516px;height:12.5px;background:#f4f4f2;color:#666">+</div>
<div class="a pm" style="left:428px;top:530px;height:12px;background:#f4f4f2;color:#666">-</div>
<div class="a" style="left:451px;top:515px;width:111px;height:26px;background:#fff;border-radius:2px;box-shadow:0 1px 0 #c4c4c4"></div>
<div class="a t b" style="left:460px;top:522px;font-size:11px;letter-spacing:-0.3px;line-height:13px;color:#222">London</div>
<svg class="a" style="left:543px;top:525px" width="9" height="6"><polygon points="0,0 9,0 4.5,5.5" fill="#888"/></svg>

<div class="a" style="left:276px;top:551px;width:294px;height:64px;background:#efefe9"></div>
<div class="a" style="left:468px;top:564px;width:90px;height:39px;background:#42403e;border:1px solid #1d1a1a;border-radius:3px"></div>
<div class="a t b" style="left:468px;top:577px;width:90px;text-align:center;font-size:11px;letter-spacing:-0.3px;line-height:13px;color:#fff">Submit</div>

</body></html>
